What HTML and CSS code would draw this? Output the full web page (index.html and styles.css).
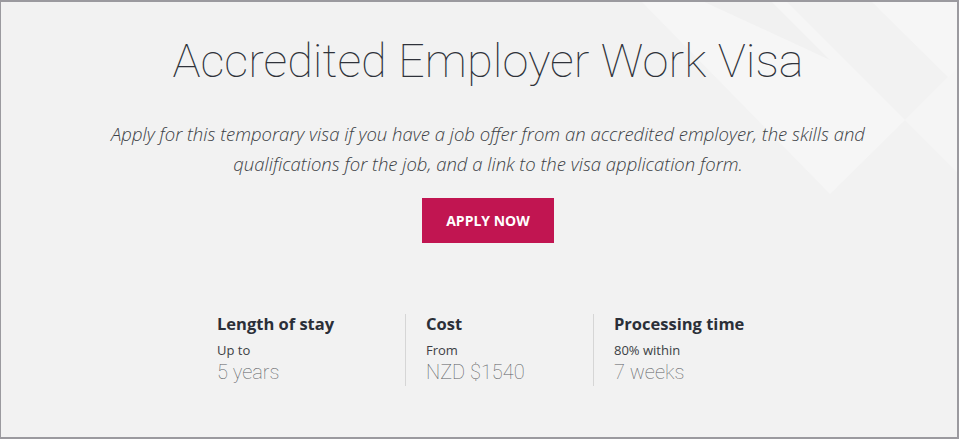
FILE: index.html
```html
<!DOCTYPE html>
<html lang="en">
<head>
<meta charset="utf-8">
<title>Accredited Employer Work Visa</title>
<link rel="stylesheet" href="styles.css">
</head>
<body>
<section class="hero">
  <svg class="pattern" width="959" height="439" viewBox="0 0 959 439" aria-hidden="true">
    <polygon points="640,0 785,0 905,120 830,194" fill="#f6f6f6"/>
    <polygon points="870,0 959,0 959,88" fill="#f6f6f6"/>
    <polygon points="905,120 959,66 959,174" fill="#f5f5f5"/>
    <polygon points="700,0 770,0 830,60" fill="#f1f1f1"/>
  </svg>
  <div class="content">
    <h1 class="title">Accredited Employer Work Visa</h1>
    <p class="lead">Apply for this temporary visa if you have a job offer from an accredited employer, the skills and qualifications for the job, and a link to the visa application form.</p>
    <a class="btn" href="#">APPLY NOW</a>
    <div class="stats">
      <div class="stat">
        <h2 class="stat-label">Length of stay</h2>
        <div class="stat-pre">Up to</div>
        <div class="stat-value">5 years</div>
      </div>
      <div class="stat">
        <h2 class="stat-label">Cost</h2>
        <div class="stat-pre">From</div>
        <div class="stat-value">NZD $1540</div>
      </div>
      <div class="stat">
        <h2 class="stat-label">Processing time</h2>
        <div class="stat-pre">80% within</div>
        <div class="stat-value">7 weeks</div>
      </div>
    </div>
  </div>
</section>
</body>
</html>
```
FILE: styles.css
```css
html, body {
  margin: 0;
  padding: 0;
}
body {
  font-family: "Open Sans", "Liberation Sans", sans-serif;
  background: #f2f2f2;
}
.hero {
  position: relative;
  box-sizing: border-box;
  width: 959px;
  height: 439px;
  border: 2px solid #9b9a9f;
  border-left-width: 1px;
  background: #f2f2f2;
  overflow: hidden;
}
.pattern {
  position: absolute;
  left: -1px;
  top: -2px;
}
.content {
  position: relative;
  display: flex;
  flex-direction: column;
  align-items: center;
  padding-left: 18px;
}
.title {
  margin: 29px 0 0;
  font-family: Roboto, sans-serif;
  font-weight: 100;
  font-size: 47px;
  line-height: 60px;
  color: #2f323a;
}
.lead {
  margin: 28px 0 0;
  width: 800px;
  text-align: center;
  font-style: italic;
  font-weight: 300;
  font-size: 18.5px;
  line-height: 30px;
  color: #3c3f45;
}
.btn {
  margin-top: 19px;
  box-sizing: border-box;
  width: 132px;
  height: 45px;
  display: flex;
  align-items: center;
  justify-content: center;
  background: #c11551;
  color: #fff;
  font-weight: 700;
  font-size: 14px;
  text-decoration: none;
}
.stats {
  margin-top: 71px;
  display: flex;
  align-self: flex-start;
  margin-left: 198px;
}
.stat {
  box-sizing: border-box;
  width: 188px;
  padding: 0 20px;
  border-left: 1px solid #d6d6d6;
  height: 72px;
}
.stat:first-child {
  border-left: none;
  padding-left: 0;
}
.stat-label {
  margin: 0;
  font-size: 16.5px;
  font-weight: 700;
  line-height: 20px;
  color: #2b2f38;
}
.stat-pre {
  margin-top: 8px;
  font-size: 13px;
  line-height: 16px;
  color: #3c3f45;
}
.stat-value {
  margin-top: 1px;
  font-family: Roboto, sans-serif;
  font-weight: 100;
  font-size: 20px;
  line-height: 26px;
  color: #5c5e63;
}
```
